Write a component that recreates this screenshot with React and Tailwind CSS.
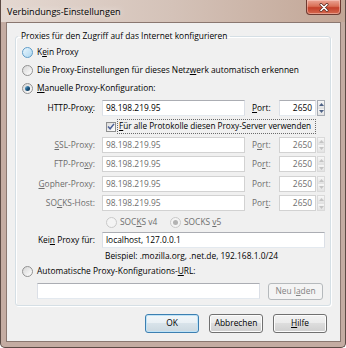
import React from "react";
import clsx from "clsx";

function Radio({ checked, disabled, hot }) {
  return (
    <span
      className={clsx(
        "flex h-[11px] w-[11px] shrink-0 items-center justify-center rounded-full border",
        disabled
          ? "border-[#c9c9c9] bg-[#f4f4f4]"
          : hot
          ? "border-[#5f9cc8] bg-gradient-to-br from-[#eaf6fd] to-[#acd6ef]"
          : "border-[#929292] bg-gradient-to-br from-[#d6d6d6] to-[#ffffff]"
      )}
    >
      {checked && (
        <span
          className={clsx(
            "h-[5px] w-[5px] rounded-full",
            disabled
              ? "bg-[#b3b3b3]"
              : "bg-gradient-to-br from-[#7fc6e8] via-[#1d5a86] to-[#0b2a45]"
          )}
        />
      )}
    </span>
  );
}

function Field({ value, disabled, className, right }) {
  return (
    <div
      className={clsx(
        "flex h-[16px] shrink-0 items-center border bg-white px-[3px]",
        right && "justify-end",
        disabled
          ? "border-[#d2d2d2] text-[#6d6d6d]"
          : "border-[#abadb3] border-x-[#dbdfe6] border-b-[#e3e9ef] text-black",
        className
      )}
    >
      {value}
    </div>
  );
}

function Spinner({ disabled }) {
  const fill = disabled ? "#c4c4c4" : "#4d6185";
  return (
    <div
      className={clsx(
        "ml-px flex h-[16px] w-[8px] shrink-0 flex-col border",
        disabled ? "border-[#dadada]" : "border-[#a7acb4]"
      )}
    >
      <div className="flex flex-1 items-center justify-center border-b border-[#e2e2e2] bg-gradient-to-b from-[#f7f7f7] to-[#e3e3e3]">
        <svg width="5" height="3" viewBox="0 0 5 3">
          <polygon points="2.5,0 5,3 0,3" fill={fill} />
        </svg>
      </div>
      <div className="flex flex-1 items-center justify-center bg-gradient-to-b from-[#f7f7f7] to-[#e3e3e3]">
        <svg width="5" height="3" viewBox="0 0 5 3">
          <polygon points="0,0 5,0 2.5,3" fill={fill} />
        </svg>
      </div>
    </div>
  );
}

function ProxyRow({ label, port, disabled, h = "h-[19.5px]" }) {
  return (
    <div className={clsx("flex items-center", h)}>
      <div
        className={clsx(
          "w-[79px] shrink-0 whitespace-nowrap text-right",
          disabled ? "text-[#6d6d6d]" : "text-black"
        )}
      >
        {label}
      </div>
      <Field value="98.198.219.95" disabled={disabled} className="ml-[7px] w-[143px]" />
      <div
        className={clsx(
          "ml-[7px] w-[27px] shrink-0",
          disabled ? "text-[#6d6d6d]" : "text-black"
        )}
      >
        {port}
      </div>
      <Field value="2650" disabled={disabled} right className="w-[37px]" />
      <Spinner disabled={disabled} />
    </div>
  );
}

function Button({ children, def, disabled, className }) {
  return (
    <div
      className={clsx(
        "flex items-center justify-center rounded-[3px] border",
        disabled
          ? "border-[#b5b9bc] bg-[#f4f4f4] text-[#838383]"
          : def
          ? "border-[#3c7fb1] bg-[linear-gradient(to_bottom,#f2f7fa_0%,#e8eff4_50%,#d8e3ea_50%,#cbd8e0_100%)] shadow-[inset_0_0_0_1px_#bfe3f7] text-black"
          : "border-[#707070] bg-[linear-gradient(to_bottom,#f2f2f2_0%,#ebebeb_50%,#dddddd_50%,#cfcfcf_100%)] shadow-[inset_0_0_0_1px_#fcfcfc] text-black",
        className
      )}
    >
      {children}
    </div>
  );
}

export default function App() {
  return (
    <div className="relative h-[348px] w-[346px] overflow-hidden rounded-b-[5px] border-x border-b border-[#5c4b45] bg-[#c4aca2] font-['Open_Sans',sans-serif] text-[8.4px] leading-none text-black">
      <div className="flex h-[22px] items-center bg-gradient-to-r from-[#e4d8d1] via-[#d4c2b8] to-[#c2a696] pl-[6px] pt-px">
        <span className="text-[9.1px] [text-shadow:0_0_6px_rgba(255,255,255,0.9)]">
          Verbindungs-Einstellungen
        </span>
      </div>
      <div className="absolute left-[305px] top-0 flex h-[15px] w-[35px] items-center justify-center rounded-b-[4px] border border-t-0 border-[#6d3a31] bg-[linear-gradient(to_bottom,#eba595_0%,#d96f56_45%,#c4402a_55%,#d56a50_100%)] shadow-[inset_0_0_0_1px_rgba(255,220,210,0.45)]">
        <svg width="10" height="9" viewBox="0 0 10 9">
          <path d="M2 1.5 L8 7.5 M8 1.5 L2 7.5" stroke="#5a2a20" strokeWidth="3" strokeLinecap="round" />
          <path d="M2 1.5 L8 7.5 M8 1.5 L2 7.5" stroke="#ffffff" strokeWidth="1.6" strokeLinecap="round" />
        </svg>
      </div>

      <div className="ml-[5px] flex h-[320px] w-[335px] flex-col border border-[#8a7770] bg-[#f0f0f0]">
        <fieldset className="ml-[8px] mt-[6px] w-[316px] min-w-0 rounded-[3px] border border-[#d5dfe5] pb-[2px] shadow-[inset_1px_1px_0_#fff,1px_1px_0_#fff]">
          <legend className="ml-[2px] px-[3px] leading-[14px]">
            Proxies für den Zugriff auf das Internet konfigurieren
          </legend>

          <div className="flex h-[18px] items-center gap-[4px] pl-[6px]">
            <Radio hot />
            <span>
              K<u>e</u>in Proxy
            </span>
          </div>
          <div className="flex h-[18px] items-center gap-[4px] pl-[6px]">
            <Radio />
            <span>
              Die Proxy-Einstellungen für dieses Netz<u>w</u>erk automatisch erkennen
            </span>
          </div>
          <div className="flex h-[19px] items-center gap-[4px] pl-[6px]">
            <Radio checked />
            <span>
              <u>M</u>anuelle Proxy-Konfiguration:
            </span>
          </div>

          <ProxyRow
            h="h-[20px]"
            label={
              <>
                HTTP-Prox<u>y</u>:
              </>
            }
            port={
              <>
                <u>P</u>ort:
              </>
            }
          />

          <div className="flex h-[17px] items-center pl-[90px]">
            <div className="flex h-[10px] w-[10px] shrink-0 items-center justify-center border border-[#8e8f8f] bg-gradient-to-br from-[#dcdcdc] to-white">
              <svg width="8" height="7" viewBox="0 0 8 7">
                <path d="M1 3.6 L3.1 5.8 L7 0.9" fill="none" stroke="#4a5f97" strokeWidth="1.5" />
              </svg>
            </div>
            <div className="ml-px flex h-[15px] w-[199px] shrink-0 items-center whitespace-nowrap border border-dotted border-[#6b6b6b] px-[1px] text-[8.2px]">
              <u>F</u>ür alle Protokolle diesen Proxy-Server verwenden
            </div>
          </div>

          <ProxyRow
            disabled
            label={
              <>
                <u>S</u>SL-Proxy:
              </>
            }
            port={
              <>
                P<u>o</u>rt:
              </>
            }
          />
          <ProxyRow
            disabled
            label={
              <>
                FTP-Pro<u>x</u>y:
              </>
            }
            port={
              <>
                Po<u>r</u>t:
              </>
            }
          />
          <ProxyRow
            disabled
            label={
              <>
                <u>G</u>opher-Proxy:
              </>
            }
            port="Port:"
          />
          <ProxyRow
            disabled
            label={
              <>
                SO<u>C</u>KS-Host:
              </>
            }
            port={
              <>
                Por<u>t</u>:
              </>
            }
          />

          <div className="flex h-[18px] items-center pl-[90px] text-[#6d6d6d]">
            <div className="flex w-[64px] items-center gap-[3px]">
              <Radio disabled />
              <span>
                SOC<u>K</u>S v4
              </span>
            </div>
            <div className="flex items-center gap-[3px]">
              <Radio disabled checked />
              <span>
                SOCKS <u>v</u>5
              </span>
            </div>
          </div>

          <div className="flex h-[18px] items-center">
            <div className="w-[79px] shrink-0 whitespace-nowrap text-right">
              Kei<u>n</u> Proxy für:
            </div>
            <Field value="localhost, 127.0.0.1" className="ml-[7px] w-[223px]" />
          </div>
          <div className="flex h-[14px] items-center pl-[89px]">
            Beispiel: .mozilla.org, .net.de, 192.168.1.0/24
          </div>
          <div className="flex h-[16px] items-center gap-[4px] pl-[6px]">
            <Radio />
            <span>
              Automatische Proxy-Konfigurations-<u>U</u>RL:
            </span>
          </div>
          <div className="flex h-[24px] items-center pl-[21px]">
            <Field value="" className="h-[15px] w-[223px]" />
            <Button disabled className="ml-[8px] h-[17px] w-[55px]">
              Neu l<u>a</u>den
            </Button>
          </div>
        </fieldset>

        <div className="mt-[8px] flex justify-end gap-[10px] pr-[13px]">
          <Button def className="h-[19px] w-[54px]">
            OK
          </Button>
          <Button className="h-[19px] w-[54px]">Abbrechen</Button>
          <Button className="h-[19px] w-[54px]">
            <u>H</u>ilfe
          </Button>
        </div>
      </div>
    </div>
  );
}
